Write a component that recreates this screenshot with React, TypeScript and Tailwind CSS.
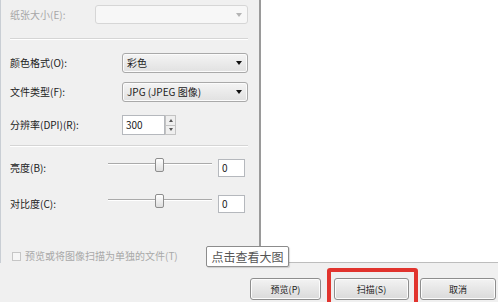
const Arrow = ({ muted = false }: { muted?: boolean }) => (
  <svg width="6" height="4" viewBox="0 0 6 4" className="mr-[5px]">
    <path d="M0 0h6L3 4z" fill={muted ? '#b4b4b4' : '#111'} />
  </svg>
)

const Select = ({ value, className = '' }: { value: string; className?: string }) => (
  <div
    className={`flex h-full items-center justify-between rounded-[3px] border border-[#a9a9a9] bg-gradient-to-b from-[#f4f4f4] to-[#e1e1e1] pl-[4px] shadow-[inset_0_0_0_1px_#fbfbfb] ${className}`}
  >
    <span>{value}</span>
    <Arrow />
  </div>
)

const Separator = () => <div className="h-[2px] border-t border-[#d5d5d5] border-b border-b-white" />

const Slider = ({ label }: { label: string }) => (
  <div className="flex h-[18px] items-center">
    <span className="w-[98px]">{label}</span>
    <div className="relative h-[18px] w-[104px]">
      <div className="absolute top-[4px] left-0 right-0 h-[2px] border-t border-[#aaaaaa] border-b border-b-white" />
      <div className="absolute top-[-1px] left-[47px] h-[14px] w-[9px] rounded-[2px] border border-[#8d8d8d] bg-gradient-to-b from-white to-[#dedede]" />
    </div>
    <div className="ml-[6px] flex h-full w-[27px] items-center border border-[#b5b8bd] bg-white pl-[3px]">0</div>
  </div>
)

const Button = ({ label, className = '' }: { label: string; className?: string }) => (
  <div
    className={`flex h-[22px] items-center justify-center rounded-[3px] border border-[#8e8e8e] bg-gradient-to-b from-[#f3f3f3] to-[#dadada] text-[9px] shadow-[inset_0_0_0_1px_#fcfcfc] ${className}`}
  >
    {label}
  </div>
)

const LeftPanel = () => (
  <div className="flex h-[263px] w-[259px] flex-col border-l border-[#c9ced4] pl-[9px] pr-[11px]">
    <div className="mt-[5px] flex h-[19px] items-center">
      <span className="w-[85px] text-[#a7a7a7]">纸张大小(E):</span>
      <div className="flex h-full flex-1 items-center justify-end rounded-[3px] border border-[#d6d6d6] bg-[#f7f7f7]">
        <Arrow muted />
      </div>
    </div>

    <div className="mt-[14px]">
      <Separator />
    </div>

    <div className="mt-[13px] flex h-[20px] items-center">
      <span className="w-[112px]">颜色格式(O):</span>
      <Select value="彩色" className="flex-1" />
    </div>
    <div className="mt-[9px] flex h-[20px] items-center">
      <span className="w-[112px]">文件类型(F):</span>
      <Select value="JPG (JPEG 图像)" className="flex-1" />
    </div>
    <div className="mt-[13px] flex h-[20px] items-center">
      <span className="w-[112px]">分辨率(DPI)(R):</span>
      <div className="flex h-full w-[43px] items-center border border-[#b5b8bd] bg-white pl-[3px]">300</div>
      <div className="flex h-full w-[11px] flex-col">
        <div className="flex flex-1 items-center justify-center border border-[#c3c3c3] bg-[#efefef]">
          <svg width="4" height="3" viewBox="0 0 4 3">
            <path d="M0 3h4L2 0z" fill="#555" />
          </svg>
        </div>
        <div className="flex flex-1 items-center justify-center border border-t-0 border-[#c3c3c3] bg-[#efefef]">
          <svg width="4" height="3" viewBox="0 0 4 3">
            <path d="M0 0h4L2 3z" fill="#555" />
          </svg>
        </div>
      </div>
    </div>

    <div className="mt-[10px]">
      <Separator />
    </div>

    <div className="mt-[12px]">
      <Slider label="亮度(B):" />
    </div>
    <div className="mt-[18px]">
      <Slider label="对比度(C):" />
    </div>

    <div className="mt-[38px] flex h-[10px] items-center text-[#a9a9a9]">
      <div className="ml-[2px] mr-[4px] h-[9px] w-[9px] border border-[#c6c6c6] bg-[#f6f6f6]" />
      <span>预览或将图像扫描为单独的文件(T)</span>
    </div>
  </div>
)

export default function App() {
  return (
    <div className="relative h-[302px] w-[498px] overflow-hidden bg-[#f0f0f0] font-['Noto_Sans_CJK_SC',sans-serif] text-[10px] leading-none text-[#222]">
      <div className="flex h-[263px]">
        <LeftPanel />
        <div className="w-[2px] bg-[#9a9a9a]" />
        <div className="flex-1 border-b border-[#bdbdbd] bg-white" />
      </div>

      <div className="flex h-[39px] items-start pt-[15px]">
        <Button label="预览(P)" className="ml-[250px] w-[71px]" />
        <Button label="扫描(S)" className="ml-[13px] w-[75px]" />
        <Button
          label="取消"
          className="ml-[11px] w-[76px] border-[#3c7fb1] from-[#eaf6fd] to-[#bee6fd]"
        />
      </div>

      <div className="absolute left-[206px] top-[246px] flex h-[21px] w-[83px] items-center justify-center rounded-[2px] border border-[#8c8c8c] bg-white text-[12px] text-[#555] shadow-[1px_1px_1px_rgba(0,0,0,0.15)]">
        点击查看大图
      </div>

      <div className="absolute left-[327px] top-[268px] h-[40px] w-[91px] rounded-[3px] border-[4px] border-[#e1342e]" />
    </div>
  )
}
